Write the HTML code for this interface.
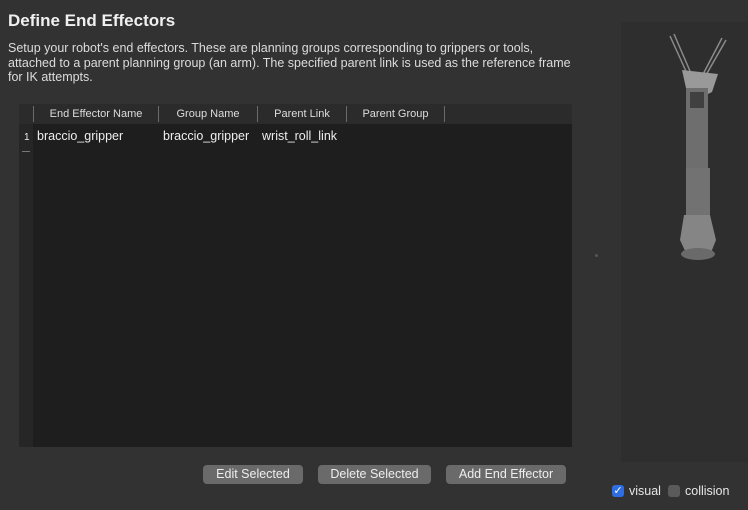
<!DOCTYPE html>
<html><head><style>
body{margin:0;width:748px;height:510px;background:#323232;font-family:"Liberation Sans",sans-serif;color:#e6e6e6;position:relative;overflow:hidden}
.a{position:absolute}
h1{position:absolute;left:8px;top:11px;margin:0;font-size:17px;font-weight:bold;color:#f0f0f0}
.p{left:8px;top:41px;font-size:12.5px;line-height:14.5px;color:#dcdcdc;width:572px}
.tbl{left:19px;top:104px;width:553px;height:343px;background:#1e1e1e}
.hdr{left:0;top:0;width:553px;height:20px;background:#2b2b2b}
.h{font-size:11px;text-align:center;color:#ddd;border-left:1px solid #6a6a6a;top:2px;height:16px;line-height:16px}
.c{top:25px;font-size:12.5px;color:#eee}
.btn{top:465px;height:19px;line-height:19px;background:#6a6a6a;border-radius:4px;text-align:center;font-size:12.5px;color:#eee}
</style></head><body>
<h1>Define End Effectors</h1>
<div class="a p">Setup your robot's end effectors. These are planning groups corresponding to grippers or tools, attached to a parent planning group (an arm). The specified parent link is used as the reference frame for IK attempts.</div>
<div class="a tbl">
 <div class="a hdr"></div>
 <div class="a" style="left:0;top:20px;width:14px;height:323px;background:#262626"></div>
 <div class="a h" style="left:14px;width:124px">End Effector Name</div>
 <div class="a h" style="left:139px;width:98px">Group Name</div>
 <div class="a h" style="left:238px;width:88px">Parent Link</div>
 <div class="a h" style="left:327px;width:97px">Parent Group</div>
 <div class="a" style="left:425px;top:2px;height:16px;border-left:1px solid #6a6a6a"></div>
 <div class="a c" style="left:5px;font-size:10px;top:28px">1</div>
 <div class="a" style="left:3px;top:47px;width:8px;height:1px;background:#777"></div>
 <div class="a c" style="left:18px">braccio_gripper</div>
 <div class="a c" style="left:144px">braccio_gripper</div>
 <div class="a c" style="left:243px">wrist_roll_link</div>
</div>
<div class="a" style="left:621px;top:22px;width:127px;height:440px;background:#2e2e2e"></div>
<div class="a" style="left:595px;top:254px;width:3px;height:3px;background:#555;border-radius:2px"></div>
<svg class="a" style="left:660px;top:30px" width="70" height="235" viewBox="0 0 70 235">
<path d="M10 6 L30 50 M14 4 L33 48 M62 8 L40 50 M66 10 L42 52" stroke="#8a8a8a" stroke-width="1.5"/>
<path d="M22 40 L58 44 L52 62 L40 68 L26 58 Z" fill="#999"/>
<rect x="26" y="58" width="22" height="80" fill="#6e6e6e"/>
<rect x="30" y="62" width="14" height="16" fill="#404040"/>
<rect x="26" y="138" width="24" height="50" fill="#727272"/>
<path d="M24 185 L50 185 L56 210 L50 225 L27 225 L20 210Z" fill="#858585"/>
<ellipse cx="38" cy="224" rx="17" ry="6" fill="#6a6a6a"/>
</svg>
<div class="a btn" style="left:203px;width:100px">Edit Selected</div>
<div class="a btn" style="left:318px;width:113px">Delete Selected</div>
<div class="a btn" style="left:446px;width:120px">Add End Effector</div>
<div class="a" style="left:612px;top:485px;width:12px;height:12px;background:#2f6ee0;border-radius:3px;color:#fff;font-size:11px;line-height:12px;text-align:center">✓</div>
<div class="a" style="left:629px;top:484px;font-size:12.5px">visual</div>
<div class="a" style="left:668px;top:485px;width:12px;height:12px;background:#5a5a5a;border-radius:3px"></div>
<div class="a" style="left:685px;top:484px;font-size:12.5px">collision</div>
</body></html>
